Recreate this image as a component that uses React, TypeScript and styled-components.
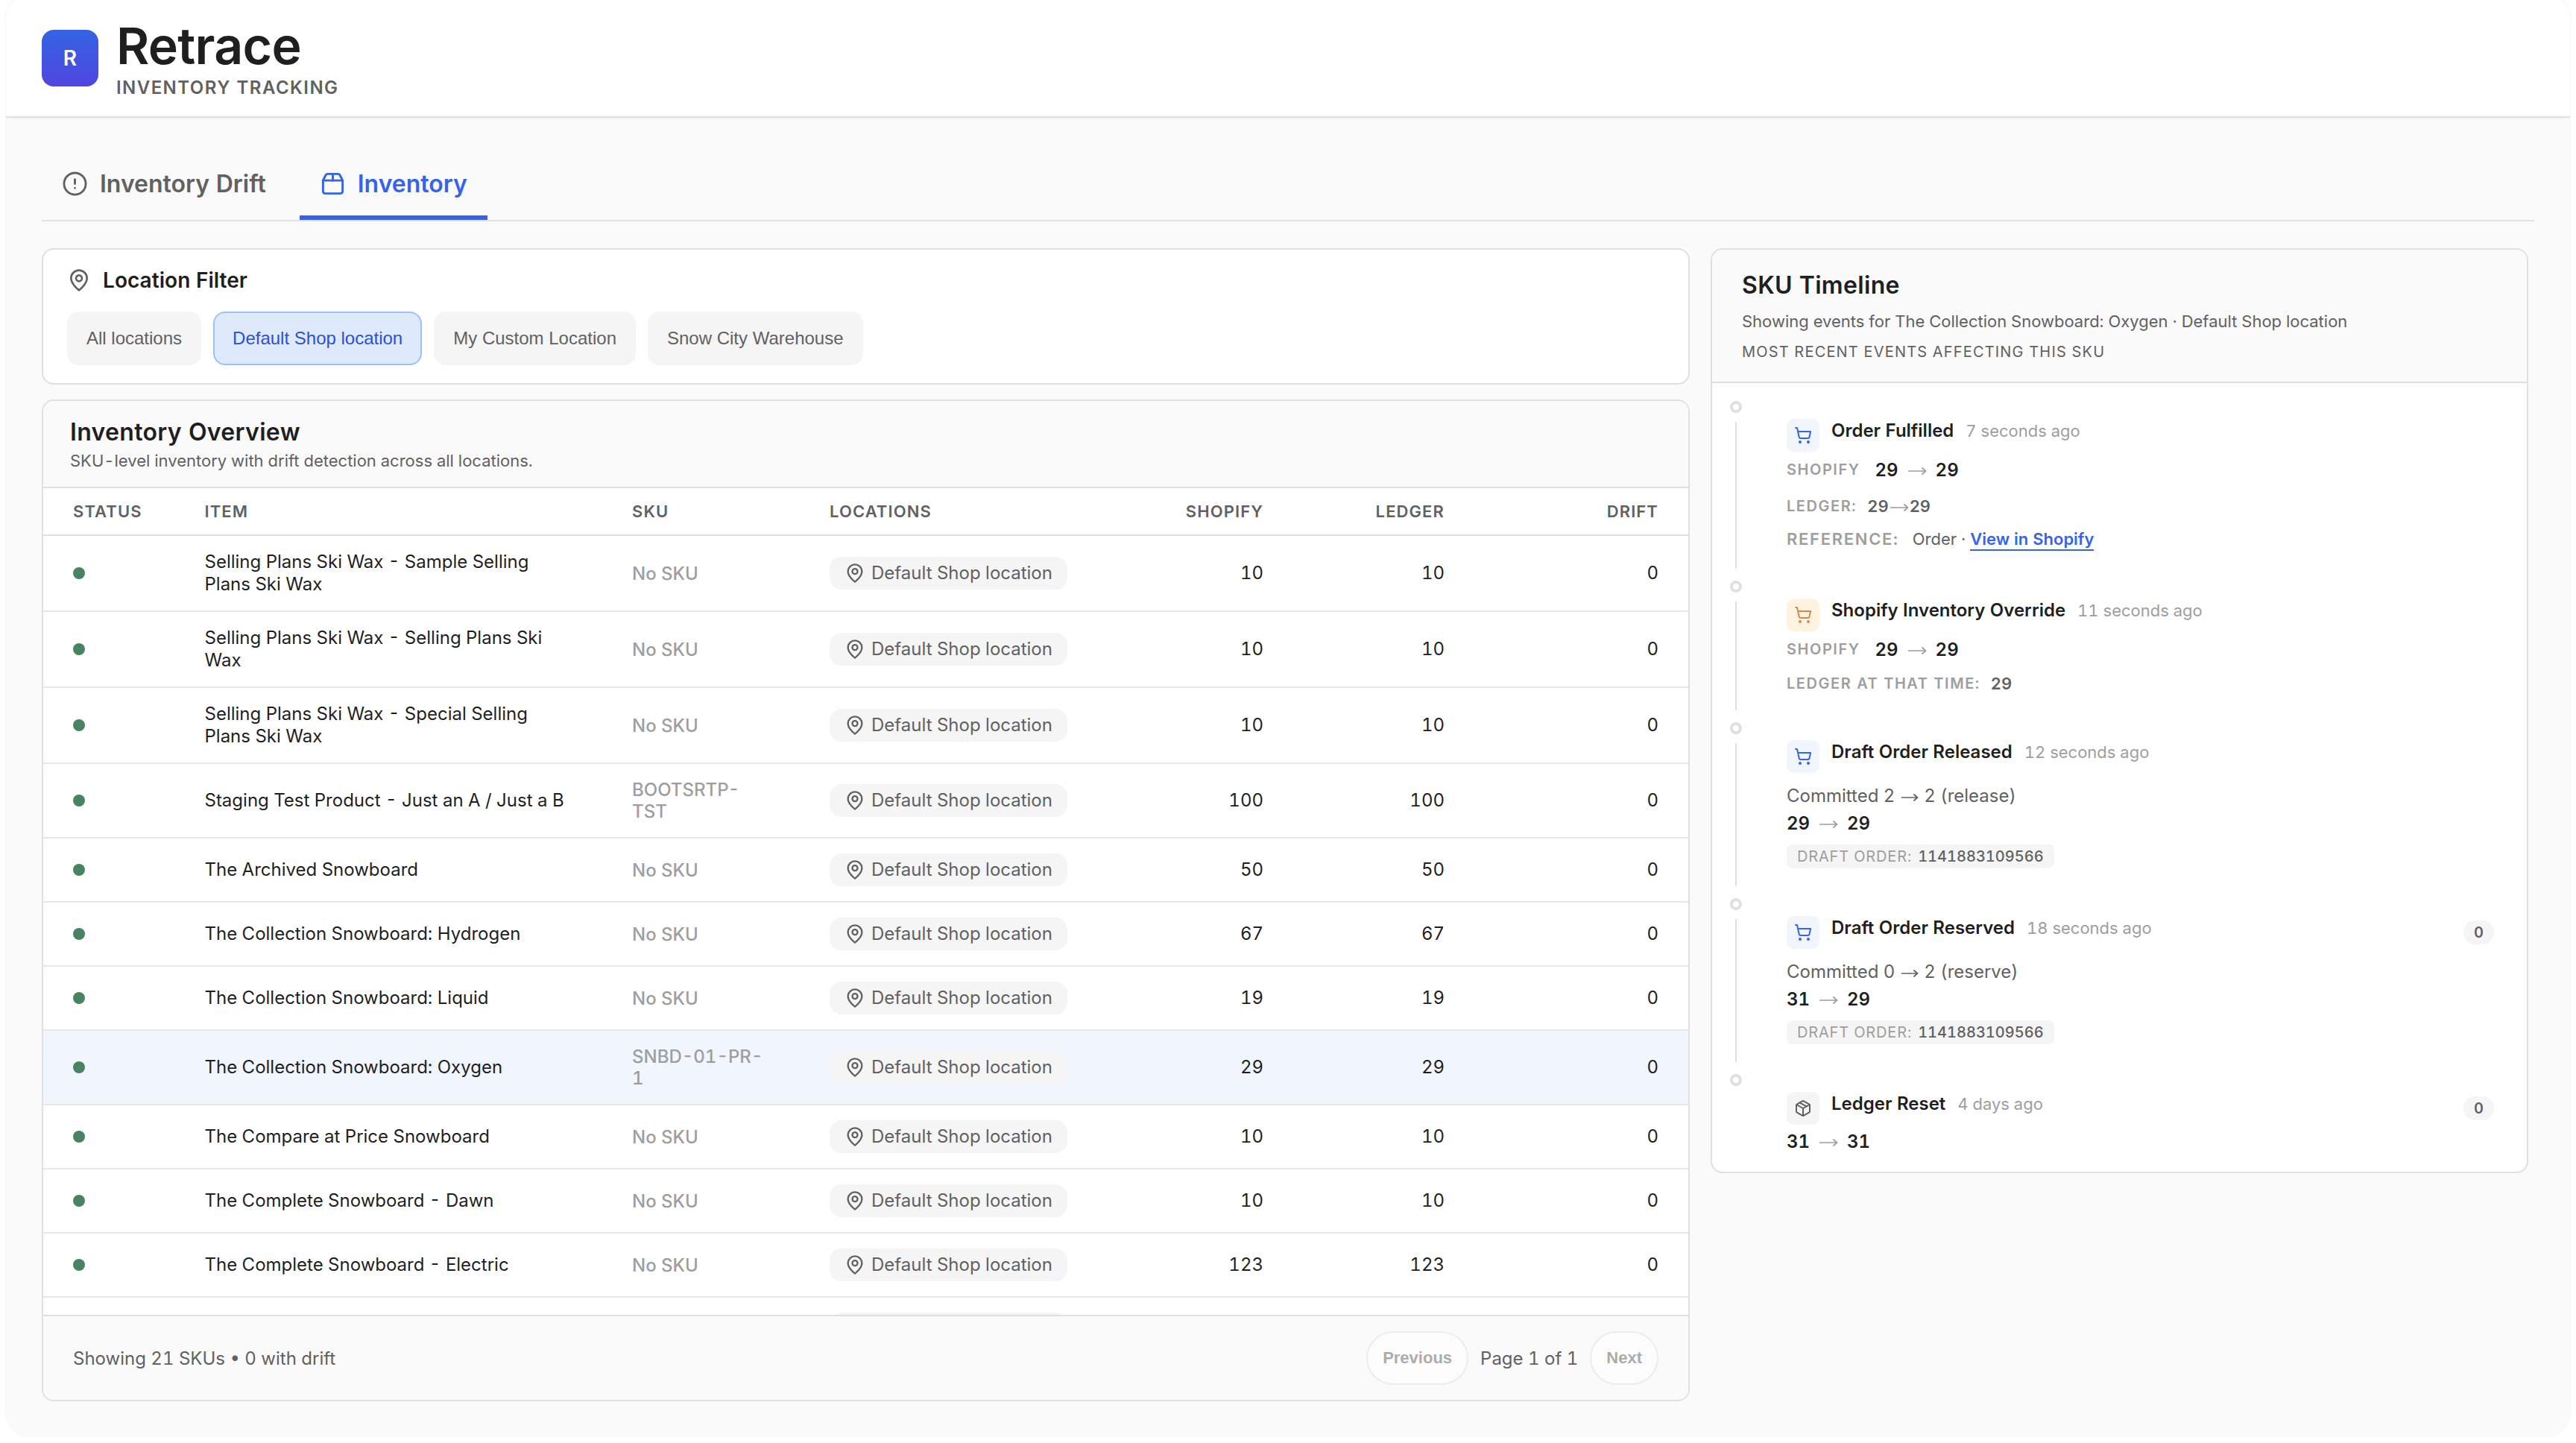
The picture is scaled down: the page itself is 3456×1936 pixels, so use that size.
import * as React from 'react';
import styled, { createGlobalStyle, css } from 'styled-components';

const colors = {
  text: '#1f1f1f',
  muted: '#616161',
  faint: '#9e9e9e',
  border: '#e0e0e0',
  rowBorder: '#e8e8e8',
  surface: '#ffffff',
  subtle: '#fafafa',
  chip: '#f5f5f5',
  primary: '#3563e9',
};

const GlobalStyle = createGlobalStyle`
  *,
  *::before {
    box-sizing: border-box;
  }

  body {
    margin: 0;
    background: #fff;
    color: ${colors.text};
    font-family: Inter, 'Liberation Sans', sans-serif;
    font-variant-numeric: tabular-nums;
    overflow: hidden;
  }

  h1, h2, h3, p {
    margin: 0;
  }
`;

const Shell = styled.div`
  height: 1937px;
  margin: -9px 8px 0;
  border-radius: 34px;
  background: ${colors.subtle};
  box-shadow: 0 0 3px rgba(0, 0, 0, 0.09);
  overflow: hidden;
`;

const Header = styled.header`
  display: flex;
  align-items: center;
  gap: 24px;
  height: 167px;
  padding: 9px 48px 0;
  background: ${colors.surface};
  border-bottom: 2px solid ${colors.border};
  box-shadow: 0 1px 3px rgba(0, 0, 0, 0.06);
`;

const LogoMark = styled.div`
  display: flex;
  align-items: center;
  justify-content: center;
  width: 76px;
  height: 76px;
  border-radius: 16px;
  background: linear-gradient(180deg, #3563e3, #4f46df);
  color: #fff;
  font-size: 28px;
  font-weight: 600;
`;

const Brand = styled.div`
  padding-top: 3px;
`;

const BrandName = styled.h1`
  font-size: 68px;
  font-weight: 600;
  line-height: 68px;
  letter-spacing: -0.7px;
`;

const Tagline = styled.p`
  margin-top: 9px;
  color: ${colors.muted};
  font-size: 24px;
  font-weight: 600;
  line-height: 28px;
  letter-spacing: 0.06em;
`;

const Main = styled.main`
  padding: 42px 48px 0;
`;

const Tabs = styled.nav`
  display: flex;
  gap: 18px;
  height: 97px;
  border-bottom: 2px solid ${colors.border};
`;

const Tab = styled.a<{ $active?: boolean }>`
  display: flex;
  align-items: center;
  gap: 16px;
  padding: 4px 27px 0;
  border-bottom: 6px solid
    ${({ $active }) => ($active ? colors.primary : 'transparent')};
  color: ${({ $active }) => ($active ? colors.primary : colors.muted)};
  font-size: 32px;
  font-weight: 600;
`;

const Columns = styled.div`
  display: flex;
  align-items: flex-start;
  gap: 28px;
  margin-top: 36px;
`;

const LeftColumn = styled.div`
  display: flex;
  flex-direction: column;
  gap: 20px;
  width: 2211px;
`;

const Card = styled.section`
  border: 2px solid ${colors.border};
  border-radius: 16px;
  background: ${colors.surface};
  overflow: hidden;
`;

const FilterCard = styled(Card)`
  height: 183px;
  padding: 24px 32px;
`;

const FilterTitle = styled.h3`
  display: flex;
  align-items: center;
  gap: 16px;
  height: 34px;
  font-size: 28px;
  font-weight: 600;
  letter-spacing: 0.05px;

  svg {
    color: ${colors.muted};
  }
`;

const FilterOptions = styled.div`
  display: flex;
  gap: 16px;
  margin-top: 25px;
`;

const FilterButton = styled.button<{ $active?: boolean }>`
  height: 72px;
  padding: 0 24px;
  border: 2px solid ${({ $active }) => ($active ? '#9bc2f8' : colors.chip)};
  border-radius: 16px;
  background: ${({ $active }) => ($active ? '#dee9fb' : colors.chip)};
  color: ${({ $active }) => ($active ? '#2b50d8' : colors.muted)};
  font: 24px 'Liberation Sans', Arial, sans-serif;
`;

const TableCard = styled(Card)`
  display: flex;
  flex-direction: column;
  height: 1344px;
`;

const CardHeader = styled.div<{ $height: number; $inset: number }>`
  flex: none;
  height: ${({ $height }) => $height}px;
  padding: 0 ${({ $inset }) => $inset}px;
  border-bottom: 2px solid ${colors.border};
  background: ${colors.subtle};
`;

const CardTitle = styled.h2<{ $top: number }>`
  padding-top: ${({ $top }) => $top}px;
  font-size: 32px;
  font-weight: 600;
  line-height: 40px;
  letter-spacing: 0.01em;
`;

const CardSubtitle = styled.p<{ $top: number }>`
  margin-top: ${({ $top }) => $top}px;
  color: ${colors.muted};
  font-size: 22px;
  line-height: 28px;
`;

const CardCaption = styled.p`
  margin-top: 14px;
  color: ${colors.muted};
  font-size: 20px;
  line-height: 26px;
  letter-spacing: 0.059em;
`;

const rowGrid = css`
  display: grid;
  grid-template-columns: 176.5px 573.5px 265px 340px 242px 243px 287px;
  align-items: center;
  padding: 0 40px;
`;

const TableHead = styled.div`
  ${rowGrid}
  flex: none;
  height: 64px;
  border-bottom: 2px solid ${colors.border};
  color: ${colors.muted};
  font-size: 22px;
  font-weight: 600;
  letter-spacing: 0.05em;
`;

const HeadCell = styled.span<{ $right?: boolean }>`
  text-align: ${({ $right }) => ($right ? 'right' : 'left')};
`;

const TableBody = styled.div`
  flex: 1;
  min-height: 0;
  overflow: hidden;
`;

const Row = styled.div<{ $selected?: boolean }>`
  ${rowGrid}
  padding-top: 20px;
  padding-bottom: 20px;
  border-bottom: 2px solid ${colors.rowBorder};
  background: ${({ $selected }) => ($selected ? '#f0f5fe' : 'transparent')};
`;

const StatusDot = styled.span`
  width: 16px;
  height: 16px;
  border-radius: 50%;
  background: #488461;
`;

const ItemName = styled.span`
  max-width: 490px;
  font-size: 24px;
  line-height: 30px;
`;

const Sku = styled.span`
  max-width: 182px;
  color: ${colors.faint};
  font-size: 24px;
  font-weight: 500;
  line-height: 29px;
`;

const LocationPill = styled.span`
  display: inline-flex;
  justify-self: start;
  align-items: center;
  gap: 8px;
  min-width: 319px;
  height: 44px;
  padding: 0 20px;
  border-radius: 16px;
  background: ${colors.chip};
  color: ${colors.muted};
  font-size: 24px;
  line-height: 30px;
  white-space: nowrap;
`;

/* the next row is scrolled out of view apart from the top of its pill */
const NextRowPill = styled(LocationPill)`
  grid-column: 4;
`;

const Quantity = styled.span`
  font-size: 24px;
  line-height: 30px;
  text-align: right;
`;

const TableFooter = styled.footer`
  display: flex;
  flex: none;
  align-items: center;
  justify-content: space-between;
  height: 114px;
  padding: 0 40px;
  border-top: 2px solid ${colors.border};
  background: ${colors.subtle};
  color: ${colors.muted};
  font-size: 24px;
`;

const Pager = styled.div`
  display: flex;
  align-items: center;
  gap: 16px;
`;

const PagerButton = styled.button`
  height: 72px;
  padding: 0 20px;
  border: 2px solid ${colors.border};
  border-radius: 36px;
  background: #fff;
  color: #5f5f5f;
  font: bold 22px 'Liberation Sans', Arial, sans-serif;
  opacity: 0.5;
`;

const TimelineCard = styled(Card)`
  width: 1097px;
  height: 1241px;
`;

const Events = styled.div`
  padding: 24px 44px 0 24px;
`;

const Event = styled.div<{ $height: number }>`
  display: flex;
  gap: 60px;
  height: ${({ $height }) => $height}px;
`;

const Rail = styled.div`
  display: flex;
  flex-direction: column;
  align-items: center;
  gap: 12px;
  width: 16px;
  padding-bottom: 16px;

  &::before {
    content: '';
    width: 16px;
    height: 16px;
    border: 4px solid ${colors.border};
    border-radius: 50%;
  }
`;

const RailLine = styled.div`
  flex: 1;
  width: 2px;
  background: ${colors.border};
`;

const EventBody = styled.div`
  flex: 1;
  padding-top: 24px;
`;

const EventHead = styled.div`
  display: flex;
  gap: 16px;
  height: 44px;
`;

const tones = {
  blue: ['#f0f5fe', colors.primary],
  amber: ['#fdf3e0', '#d9864f'],
  gray: [colors.chip, colors.muted],
};

const EventIcon = styled.div<{ $tone: keyof typeof tones }>`
  display: flex;
  align-items: center;
  justify-content: center;
  width: 44px;
  height: 44px;
  border-radius: 10px;
  background: ${({ $tone }) => tones[$tone][0]};
  color: ${({ $tone }) => tones[$tone][1]};
`;

const EventTitle = styled.span`
  font-size: 24px;
  font-weight: 600;
  line-height: 32px;
`;

const EventTime = styled.span`
  color: ${colors.faint};
  font-size: 22px;
  line-height: 32px;
`;

const DeltaBadge = styled.span`
  display: flex;
  align-items: center;
  justify-content: center;
  width: 41px;
  height: 32px;
  margin: 6px 0 0 auto;
  border-radius: 16px;
  background: ${colors.chip};
  color: ${colors.muted};
  font-size: 20px;
  font-weight: 600;
`;

const DetailLine = styled.div<{ $top: number }>`
  display: flex;
  align-items: center;
  height: 30px;
  margin-top: ${({ $top }) => $top}px;
  color: ${colors.muted};
  font-size: 22px;
`;

const Label = styled.span<{ $size?: number; $gap?: number }>`
  margin-right: ${({ $gap = 14 }) => $gap}px;
  color: ${colors.faint};
  font-size: ${({ $size = 20 }) => $size}px;
  font-weight: 600;
  letter-spacing: 0.077em;
`;

const Change = styled.span`
  display: flex;
  align-items: center;
  gap: 12px;
  color: ${colors.text};
  font-size: 24px;
  font-weight: 600;
`;

const LedgerChange = styled.span`
  display: flex;
  align-items: center;
  gap: 1px;
  font-weight: 600;
`;

const Note = styled.span`
  font-size: 24px;
  line-height: 30px;

  svg {
    color: ${colors.muted};
    top: 0;
    margin: 0 1px;
  }
`;

const ShopifyLink = styled.a`
  margin: 2px 0 0 6px;
  border-bottom: 2px solid ${colors.primary};
  color: ${colors.primary};
  font-weight: 600;
  line-height: 28px;
`;

const DraftTag = styled.div`
  display: inline-flex;
  align-items: center;
  height: 32px;
  margin-top: 14px;
  padding: 0 14px;
  border-radius: 8px;
  background: ${colors.chip};
  color: ${colors.muted};
  font-size: 20px;
  font-weight: 500;
`;

const DraftLabel = styled.span`
  margin-right: 8px;
  color: ${colors.faint};
  font-weight: 400;
  letter-spacing: 0.042em;
`;

interface IconProps {
  size: number;
}

const iconAttrs = {
  viewBox: '0 0 24 24',
  fill: 'none',
  stroke: 'currentColor',
  strokeWidth: 2,
  strokeLinecap: 'round' as const,
  strokeLinejoin: 'round' as const,
};

const AlertIcon: React.FC<IconProps> = ({ size }) => (
  <svg width={size} height={size} {...iconAttrs}>
    <circle cx="12" cy="12" r="10" />
    <path d="M12 8v4M12 16h.01" />
  </svg>
);

const BoxIcon: React.FC<IconProps> = ({ size }) => (
  <svg width={size} height={size} {...iconAttrs}>
    <path d="M12 3v6" />
    <path d="M16.76 3a2 2 0 0 1 1.8 1.1l2.23 4.479a2 2 0 0 1 .21.891V19a2 2 0 0 1-2 2H5a2 2 0 0 1-2-2V9.472a2 2 0 0 1 .211-.894L5.45 4.1A2 2 0 0 1 7.24 3z" />
    <path d="M3.054 9.013h17.893" />
  </svg>
);

const PinIcon: React.FC<IconProps> = ({ size }) => (
  <svg width={size} height={size} {...iconAttrs}>
    <path d="M20 10c0 6-8 12-8 12s-8-6-8-12a8 8 0 0 1 16 0Z" />
    <circle cx="12" cy="10" r="3" />
  </svg>
);

const CartIcon: React.FC<IconProps> = ({ size }) => (
  <svg width={size} height={size} {...iconAttrs}>
    <circle cx="8" cy="21" r="1" />
    <circle cx="19" cy="21" r="1" />
    <path d="M2.05 2.05h2l2.66 12.42a2 2 0 0 0 2 1.58h9.78a2 2 0 0 0 1.95-1.57l1.65-7.43H5.12" />
  </svg>
);

const PackageIcon: React.FC<IconProps> = ({ size }) => (
  <svg width={size} height={size} {...iconAttrs}>
    <path d="m7.5 4.27 9 5.15" />
    <path d="M21 8a2 2 0 0 0-1-1.73l-7-4a2 2 0 0 0-2 0l-7 4A2 2 0 0 0 3 8v8a2 2 0 0 0 1 1.73l7 4a2 2 0 0 0 2 0l7-4A2 2 0 0 0 21 16Z" />
    <path d="m3.3 7 8.7 5 8.7-5M12 22V12" />
  </svg>
);

const ArrowSvg = styled.svg`
  color: ${colors.faint};
  position: relative;
  top: 2px;
`;

const Arrow: React.FC<{ width?: number }> = ({ width = 26 }) => (
  <ArrowSvg
    width={width}
    height="12"
    viewBox={`0 0 ${width} 12`}
    fill="none"
    stroke="currentColor"
    strokeWidth="1.7"
  >
    <path d={`M1 6h${width - 2.5}M${width - 6.5} 1.5l5 4.5-5 4.5`} />
  </ArrowSvg>
);

interface Item {
  name: string;
  sku?: string;
  quantity: number;
  selected?: boolean;
}

const items: Item[] = [
  { name: 'Selling Plans Ski Wax - Sample Selling Plans Ski Wax', quantity: 10 },
  { name: 'Selling Plans Ski Wax - Selling Plans Ski Wax', quantity: 10 },
  { name: 'Selling Plans Ski Wax - Special Selling Plans Ski Wax', quantity: 10 },
  {
    name: 'Staging Test Product - Just an A / Just a B',
    sku: 'BOOTSRTP-TST',
    quantity: 100,
  },
  { name: 'The Archived Snowboard', quantity: 50 },
  { name: 'The Collection Snowboard: Hydrogen', quantity: 67 },
  { name: 'The Collection Snowboard: Liquid', quantity: 19 },
  {
    name: 'The Collection Snowboard: Oxygen',
    sku: 'SNBD-01-PR-1',
    quantity: 29,
    selected: true,
  },
  { name: 'The Compare at Price Snowboard', quantity: 10 },
  { name: 'The Complete Snowboard - Dawn', quantity: 10 },
  { name: 'The Complete Snowboard - Electric', quantity: 123 },
];

const ItemRow: React.FC<{ item: Item }> = ({ item }) => (
  <Row $selected={item.selected}>
    <StatusDot />
    <ItemName>{item.name}</ItemName>
    <Sku>{item.sku || 'No SKU'}</Sku>
    <LocationPill>
      <PinIcon size={28} />
      Default Shop location
    </LocationPill>
    <Quantity>{item.quantity}</Quantity>
    <Quantity>{item.quantity}</Quantity>
    <Quantity>0</Quantity>
  </Row>
);

interface TimelineEventProps {
  title: string;
  time: string;
  tone: keyof typeof tones;
  height: number;
  icon?: React.ReactNode;
  delta?: string;
  last?: boolean;
  children: React.ReactNode;
}

const TimelineEvent: React.FC<TimelineEventProps> = ({
  title,
  time,
  tone,
  height,
  icon = <CartIcon size={24} />,
  delta,
  last,
  children,
}) => (
  <Event $height={height}>
    <Rail>{!last && <RailLine />}</Rail>
    <EventBody>
      <EventHead>
        <EventIcon $tone={tone}>{icon}</EventIcon>
        <EventTitle>{title}</EventTitle>
        <EventTime>{time}</EventTime>
        {delta && <DeltaBadge>{delta}</DeltaBadge>}
      </EventHead>
      {children}
    </EventBody>
  </Event>
);

const QuantityChange: React.FC<{ from: number; to: number }> = ({ from, to }) => (
  <Change>
    {from}
    <Arrow />
    {to}
  </Change>
);

const App: React.FC<{}> = () => {
  return (
    <>
      <GlobalStyle />
      <Shell>
        <Header>
          <LogoMark>R</LogoMark>
          <Brand>
            <BrandName>Retrace</BrandName>
            <Tagline>INVENTORY TRACKING</Tagline>
          </Brand>
        </Header>
        <Main>
          <Tabs>
            <Tab>
              <AlertIcon size={35} />
              Inventory Drift
            </Tab>
            <Tab $active>
              <BoxIcon size={35} />
              Inventory
            </Tab>
          </Tabs>
          <Columns>
            <LeftColumn>
              <FilterCard>
                <FilterTitle>
                  <PinIcon size={32} />
                  Location Filter
                </FilterTitle>
                <FilterOptions>
                  <FilterButton>All locations</FilterButton>
                  <FilterButton $active>Default Shop location</FilterButton>
                  <FilterButton>My Custom Location</FilterButton>
                  <FilterButton>Snow City Warehouse</FilterButton>
                </FilterOptions>
              </FilterCard>
              <TableCard>
                <CardHeader $height={117} $inset={36}>
                  <CardTitle $top={22}>Inventory Overview</CardTitle>
                  <CardSubtitle $top={4}>
                    SKU-level inventory with drift detection across all locations.
                  </CardSubtitle>
                </CardHeader>
                <TableHead>
                  <HeadCell>STATUS</HeadCell>
                  <HeadCell>ITEM</HeadCell>
                  <HeadCell>SKU</HeadCell>
                  <HeadCell>LOCATIONS</HeadCell>
                  <HeadCell $right>SHOPIFY</HeadCell>
                  <HeadCell $right>LEDGER</HeadCell>
                  <HeadCell $right>DRIFT</HeadCell>
                </TableHead>
                <TableBody>
                  {items.map(item => (
                    <ItemRow key={item.name} item={item} />
                  ))}
                  <Row>
                    <NextRowPill />
                  </Row>
                </TableBody>
                <TableFooter>
                  <span>Showing 21 SKUs • 0 with drift</span>
                  <Pager>
                    <PagerButton>Previous</PagerButton>
                    <span>Page 1 of 1</span>
                    <PagerButton>Next</PagerButton>
                  </Pager>
                </TableFooter>
              </TableCard>
            </LeftColumn>
            <TimelineCard>
              <CardHeader $height={179} $inset={40}>
                <CardTitle $top={28}>SKU Timeline</CardTitle>
                <CardSubtitle $top={14}>
                  Showing events for The Collection Snowboard: Oxygen · Default
                  Shop location
                </CardSubtitle>
                <CardCaption>MOST RECENT EVENTS AFFECTING THIS SKU</CardCaption>
              </CardHeader>
              <Events>
                <TimelineEvent
                  title="Order Fulfilled"
                  time="7 seconds ago"
                  tone="blue"
                  height={241}
                >
                  <DetailLine $top={9}>
                    <Label $gap={20}>SHOPIFY</Label>
                    <QuantityChange from={29} to={29} />
                  </DetailLine>
                  <DetailLine $top={19}>
                    <Label>LEDGER:</Label>
                    <LedgerChange>
                      29
                      <Arrow />
                      29
                    </LedgerChange>
                  </DetailLine>
                  <DetailLine $top={14}>
                    <Label $size={22} $gap={18}>
                      REFERENCE:
                    </Label>
                    Order ·<ShopifyLink>View in Shopify</ShopifyLink>
                  </DetailLine>
                </TimelineEvent>
                <TimelineEvent
                  title="Shopify Inventory Override"
                  time="11 seconds ago"
                  tone="amber"
                  height={190}
                >
                  <DetailLine $top={9}>
                    <Label $gap={20}>SHOPIFY</Label>
                    <QuantityChange from={29} to={29} />
                  </DetailLine>
                  <DetailLine $top={16}>
                    <Label>LEDGER AT THAT TIME:</Label>
                    <LedgerChange>29</LedgerChange>
                  </DetailLine>
                </TimelineEvent>
                <TimelineEvent
                  title="Draft Order Released"
                  time="12 seconds ago"
                  tone="blue"
                  height={236}
                >
                  <DetailLine $top={16}>
                    <Note>
                      Committed 2 <Arrow width={24} /> 2 (release)
                    </Note>
                  </DetailLine>
                  <DetailLine $top={6}>
                    <QuantityChange from={29} to={29} />
                  </DetailLine>
                  <DraftTag>
                    <DraftLabel>DRAFT ORDER:</DraftLabel>
                    1141883109566
                  </DraftTag>
                </TimelineEvent>
                <TimelineEvent
                  title="Draft Order Reserved"
                  time="18 seconds ago"
                  tone="blue"
                  height={236}
                  delta="0"
                >
                  <DetailLine $top={16}>
                    <Note>
                      Committed 0 <Arrow width={24} /> 2 (reserve)
                    </Note>
                  </DetailLine>
                  <DetailLine $top={6}>
                    <QuantityChange from={31} to={29} />
                  </DetailLine>
                  <DraftTag>
                    <DraftLabel>DRAFT ORDER:</DraftLabel>
                    1141883109566
                  </DraftTag>
                </TimelineEvent>
                <TimelineEvent
                  title="Ledger Reset"
                  time="4 days ago"
                  tone="gray"
                  height={131}
                  icon={<PackageIcon size={24} />}
                  delta="0"
                  last
                >
                  <DetailLine $top={7}>
                    <QuantityChange from={31} to={31} />
                  </DetailLine>
                </TimelineEvent>
              </Events>
            </TimelineCard>
          </Columns>
        </Main>
      </Shell>
    </>
  );
};

export default App;
